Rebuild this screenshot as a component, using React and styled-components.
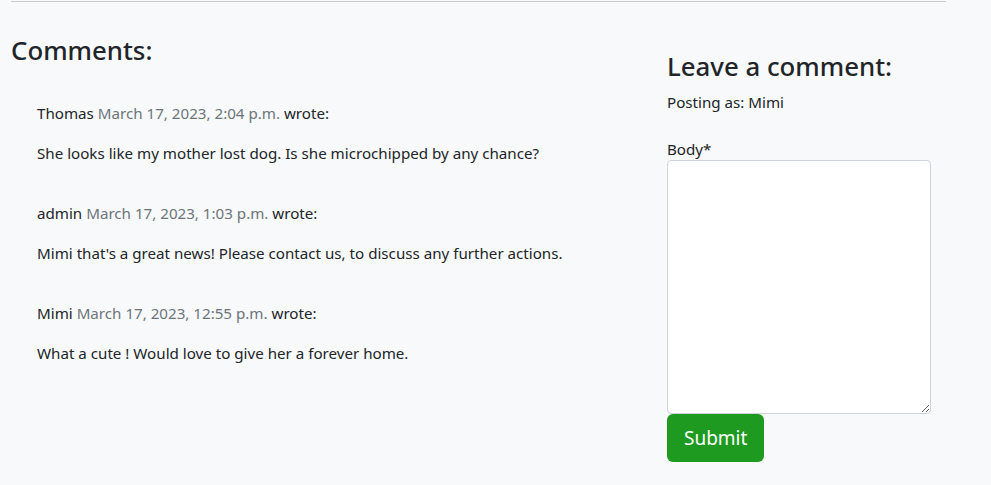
import styled, { createGlobalStyle } from 'styled-components'

const GlobalStyle = createGlobalStyle`
  html, body {
    margin: 0;
    padding: 0;
    background: #f8f9fa;
  }
  body {
    font-family: "Noto Sans", "Open Sans", sans-serif;
    font-size: 15.15px;
    line-height: 24px;
    color: #212529;
  }
`

const comments = [
  {
    name: 'Thomas',
    date: 'March 17, 2023, 2:04 p.m.',
    body: 'She looks like my mother lost dog. Is she microchipped by any chance?',
  },
  {
    name: 'admin',
    date: 'March 17, 2023, 1:03 p.m.',
    body: "Mimi that's a great news! Please contact us, to discuss any further actions.",
  },
  {
    name: 'Mimi',
    date: 'March 17, 2023, 12:55 p.m.',
    body: 'What a cute ! Would love to give her a forever home.',
  },
]

const App = () => {
  return <Page>
    <GlobalStyle />
    <Rule />
    <Row>
      <CommentsCol>
        <Heading>Comments:</Heading>
        <List>
          {comments.map((c) => (
            <Comment key={c.date}>
              <Meta>
                {c.name} <span>{c.date}</span> wrote:
              </Meta>
              <Body>{c.body}</Body>
            </Comment>
          ))}
        </List>
      </CommentsCol>
      <FormCol>
        <Heading $offset>Leave a comment:</Heading>
        <Posting>Posting as: Mimi</Posting>
        <form onSubmit={(e) => e.preventDefault()}>
          <Label htmlFor="id_body">Body*</Label>
          <TextArea id="id_body" />
          <SubmitButton type="submit">Submit</SubmitButton>
        </form>
      </FormCol>
    </Row>
  </Page>
}

const Page = styled.div`
  width: 935px;
  padding: 0 0 0 11px;
  min-height: 485px;
  box-sizing: content-box;
`

const Rule = styled.hr`
  margin: 0;
  border: 0;
  border-top: 1px solid #c9cbcd;
  height: 0;
  position: relative;
  top: 1px;
`

const Row = styled.div`
  display: flex;
`

const CommentsCol = styled.div`
  width: 656px;
`

const FormCol = styled.div`
  width: 279px;
`

const Heading = styled.h3`
  margin: ${(p) => (p.$offset ? '49px' : '33px')} 0 0;
  font-size: 25.8px;
  font-weight: 500;
  line-height: 32px;
`

const List = styled.div`
  padding: 35px 0 0 26px;
`

const Comment = styled.div`
  margin-bottom: 36px;
`

const Meta = styled.p`
  margin: 0 0 16px;
  span {
    color: #6c757d;
  }
`

const Body = styled.p`
  margin: 0;
`

const Posting = styled.p`
  margin: 8px 0 23px;
`

const Label = styled.label`
  display: block;
`

const TextArea = styled.textarea`
  display: block;
  box-sizing: border-box;
  width: 264px;
  height: 254px;
  margin: -1px 0 0;
  padding: 6px 12px;
  border: 1px solid #ced4da;
  border-radius: 4px;
  background: #fff;
  font: inherit;
  resize: vertical;
`

const SubmitButton = styled.button`
  display: block;
  margin-top: 0;
  height: 48px;
  padding: 0 17px;
  border: 0;
  border-radius: 6px;
  background: #1e9a20;
  color: #fff;
  font-family: inherit;
  font-size: 19px;
  cursor: pointer;
`

export default App
